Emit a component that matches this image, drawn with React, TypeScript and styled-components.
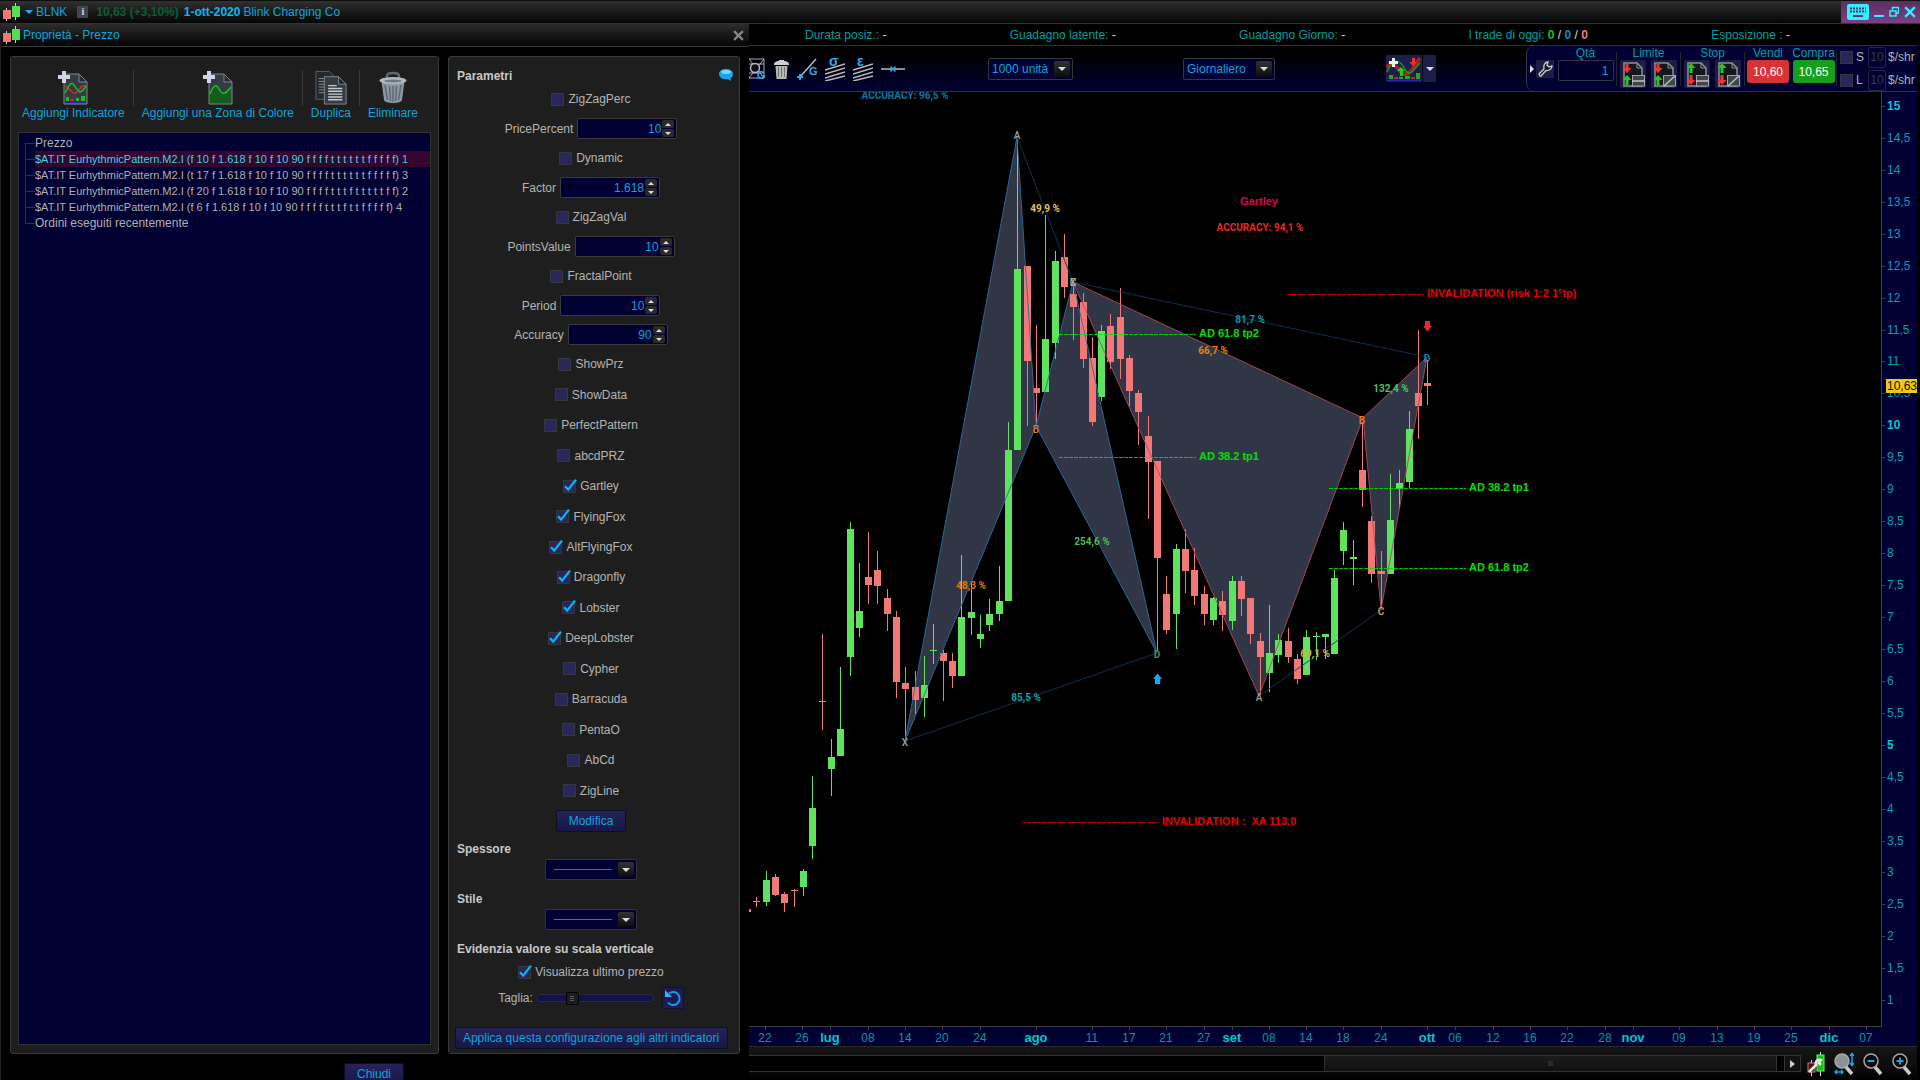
import React, { useState } from 'react';
import styled, { createGlobalStyle, css } from 'styled-components';

/* ---------- theme values ---------- */
const SANS = '"Liberation Sans", Arial, sans-serif';
const CYAN = '#0ba5dc';
const TEAL = '#009f9f';
const NAVY = '#000033';
const UP = '#5fe35f';
const DOWN = '#f27878';

const GlobalStyle = createGlobalStyle`
  * { box-sizing: border-box; }
  html, body { margin: 0; background: #000; }
  body, button, input, select {
    font-family: ${SANS};
    font-size: 12px;
    line-height: 16px;
  }
  button { padding: 0; border: 0; background: none; color: inherit; cursor: pointer; }
  svg { display: block; }
`;

/* ---------- window frame ---------- */
const Window = styled.div`
  height: 100vh;
  display: grid;
  grid-template-rows: 24px minmax(0, 1fr);
  overflow: hidden;
  background: #000;
  color: ${CYAN};
`;

const TitleBar = styled.header`
  display: flex;
  align-items: center;
  padding-left: 2px;
  border-top: 1px solid #0c0c0c;
  border-bottom: 1px solid #333;
  background: linear-gradient(#303030, #111 70%, #060606);
`;

const TitleGap = styled.span<{ $w: number }>`
  flex: none;
  width: ${(p) => p.$w}px;
`;

const Quote = styled.strong`
  color: #06602f;
`;

const SessionDate = styled.strong`
  margin-left: 5px;
  margin-right: 3px;
  color: #12b4f0;
`;

const InfoBadge = styled.button`
  width: 11px;
  height: 12px;
  margin: 0 8px 0 10px;
  background: #44444c;
  color: #ddd;
  font: bold 10px/12px "Liberation Serif", serif;
`;

const WindowControls = styled.div`
  display: flex;
  align-items: center;
  gap: 5px;
  align-self: stretch;
  width: 79px;
  margin-left: auto;
  padding-left: 6px;
  background: linear-gradient(#57305e, #7d3f86);
  color: #3af0ff;
`;

const Workspace = styled.div`
  display: grid;
  grid-template-columns: 749px minmax(0, 1fr);
  min-height: 0;
`;

/* ---------- properties dialog ---------- */
const Dialog = styled.section`
  display: flex;
  flex-direction: column;
  min-height: 0;
  overflow: hidden;
  border-left: 1px solid #222;
`;

const DialogTitle = styled.div`
  display: flex;
  align-items: center;
  justify-content: space-between;
  height: 23px;
  flex: none;
  padding: 0 5px 0 1px;
  border-bottom: 1px solid #383838;
  background: linear-gradient(#2c2c2c, #101010 70%, #050505);
`;

const DialogName = styled.h2`
  display: flex;
  align-items: center;
  gap: 3px;
  margin: 0;
  font-size: 12px;
  font-weight: normal;
`;

const DialogBody = styled.div`
  display: flex;
  flex: 1;
  gap: 9px;
  min-height: 0;
  padding: 9px 9px 0;
`;

const Panel = styled.div`
  display: flex;
  flex-direction: column;
  border: 1px solid #3a3a3a;
  border-radius: 3px;
  background: #1e1e1e;
`;

const IndicatorPanel = styled(Panel)`
  flex: 1;
  min-width: 0;
  padding: 0 7px 8px;
`;

const ParamPanel = styled(Panel)`
  width: 292px;
  flex: none;
  padding: 0 6px 4px 0;
  color: #b4b4b4;
`;

const DialogFooter = styled.div`
  display: flex;
  justify-content: center;
  flex: none;
  height: 26px;
  padding: 9px 2px 0 0;
`;

const IndicatorToolbar = styled.div`
  display: flex;
  height: 75px;
  flex: none;
  padding-top: 13px;
  margin-left: -4px;
`;

const ToolAction = styled.button`
  display: flex;
  flex-direction: column;
  align-items: center;
  justify-content: flex-start;
  padding: 1px 8px 0;
  white-space: nowrap;
`;

const ToolDivider = styled.span`
  width: 1px;
  height: 36px;
  background: #3a3a3a;
`;

const Tree = styled.ul`
  flex: 1;
  margin: 0;
  padding: 2px 0 0 6px;
  list-style: none;
  border: 1px solid #333;
  background: ${NAVY};
  color: #b0b0b0;
`;

const TreeItem = styled.li<{ $selected?: boolean }>`
  display: grid;
  grid-template-columns: 10px 1fr;
  height: 16px;
  --branch-top: 0px;
  --branch-size: 16px;
  &::before {
    content: '';
    background:
      linear-gradient(#064060, #064060) 0 8px / 10px 1px no-repeat,
      linear-gradient(#064060, #064060) 0 var(--branch-top) / 1px var(--branch-size) no-repeat;
  }
  &:first-child { --branch-top: 8px; --branch-size: 8px; }
  &:last-child { --branch-size: 8px; }
  ${(p) =>
    p.$selected &&
    css`
      color: #37d5e0;
      button { background: #33052f; }
    `}
`;

const TreeButton = styled.button<{ $long: boolean }>`
  font-size: ${(p) => (p.$long ? 11 : 12)}px;
  text-align: left;
  white-space: nowrap;
`;

/* ---------- parameter form ---------- */
const ParamHeader = styled.div`
  display: flex;
  justify-content: space-between;
  height: 27px;
  flex: none;
  padding: 11px 0 0 8px;
`;

const Heading = styled.h3`
  display: block;
  margin: 0;
  color: #c8c8c8;
  font: bold 12px/16px ${SANS};
`;

const CheckRow = styled.label<{ $h?: number }>`
  display: flex;
  align-items: center;
  justify-content: center;
  gap: 4px;
  height: ${(p) => (p.$h ? `${p.$h}px` : 'auto')};
`;

const CheckHolder = styled.span`
  position: relative;
  width: 13px;
  height: 13px;
  svg {
    position: absolute;
    left: 0;
    bottom: 1px;
    display: none;
    pointer-events: none;
  }
  input:checked + svg { display: block; }
`;

const CheckInput = styled.input`
  appearance: none;
  display: block;
  width: 13px;
  height: 13px;
  margin: 0;
  border: 1px solid #36363f;
  background: #29265a;
`;

const FieldRow = styled.label`
  display: flex;
  align-items: center;
  justify-content: center;
  gap: 4px;
  height: 29px;
`;

const Spinner = styled.span`
  display: flex;
  align-items: center;
  width: 100px;
  height: 21px;
  padding-right: 2px;
  border: 1px solid #3a3a3a;
  border-radius: 2px;
  background: ${NAVY};
`;

const SpinInput = styled.input`
  flex: 1;
  min-width: 0;
  padding: 0;
  border: 0;
  outline: 0;
  background: none;
  color: ${CYAN};
  text-align: right;
`;

const SpinButtons = styled.span`
  display: grid;
  gap: 1px;
  margin-left: 1px;
`;

const SpinButton = styled.button`
  display: grid;
  place-items: center;
  width: 12px;
  height: 8px;
  border-radius: 2px;
  background: #2a2a2a;
`;

const PatternList = styled.div`
  display: grid;
  grid-auto-rows: 1fr;
  flex: 1;
  min-height: 0;
`;

const CenterRow = styled.div<{ $h: number }>`
  display: flex;
  align-items: center;
  justify-content: center;
  height: ${(p) => p.$h}px;
  flex: none;
`;

const ApplyRow = styled(CenterRow)`
  align-items: flex-end;
`;

const PushButton = styled.button<{ $w: number }>`
  width: ${(p) => p.$w}px;
  height: 22px;
  flex: none;
  border: 1px solid #0e0e22;
  border-radius: 2px;
  background: linear-gradient(#242458, #161648);
  color: ${CYAN};
`;

const Section = styled.div`
  flex: none;
  padding: 6px 0 5px;
  ${Heading} { padding: 0 0 0 8px; margin-bottom: 2px; }
`;

const SelectFrame = styled.span<{ $w: number; $h: number }>`
  display: flex;
  align-items: center;
  width: ${(p) => p.$w}px;
  height: ${(p) => p.$h}px;
  flex: none;
  position: relative;
  border: 1px solid #36363a;
  border-radius: 2px;
  background: ${NAVY};
`;

const Select = styled.select`
  appearance: none;
  width: 100%;
  height: 100%;
  padding: 0 18px 0 3px;
  border: 0;
  outline: 0;
  background: none;
  color: ${CYAN};
`;

const LineSelect = styled(Select)`
  color: transparent;
  background: linear-gradient(#0e86b8, #0e86b8) 8px 50% / 58px 1px no-repeat;
`;

const DropMark = styled.span`
  position: absolute;
  top: 2px;
  right: 2px;
  bottom: 2px;
  display: grid;
  place-items: center;
  width: 16px;
  border-radius: 2px;
  background: linear-gradient(#333, #0c0c0c);
  pointer-events: none;
`;

const SizeRow = styled.div`
  display: flex;
  align-items: center;
  justify-content: center;
  height: 26px;
`;

const Slider = styled.input`
  appearance: none;
  width: 118px;
  height: 14px;
  margin: 0 8px 0 3px;
  background: none;
  &::-webkit-slider-runnable-track {
    height: 8px;
    border: 1px solid #2c2c40;
    border-radius: 4px;
    background: #11114e;
  }
  &::-webkit-slider-thumb {
    appearance: none;
    width: 13px;
    height: 13px;
    margin-top: -3px;
    border: 1px solid #000;
    border-radius: 2px;
    background:
      linear-gradient(#555, #555) 50% 3px / 4px 1px no-repeat,
      linear-gradient(#555, #555) 50% 5px / 4px 1px no-repeat,
      linear-gradient(#555, #555) 50% 7px / 4px 1px no-repeat,
      #1c1c1e;
  }
`;

const ResetButton = styled.button`
  display: grid;
  place-items: center;
  width: 22px;
  height: 22px;
  border: 1px solid #111130;
  background: #1c1c54;
`;

/* ---------- trading column ---------- */
const TradeColumn = styled.main`
  display: grid;
  grid-template-rows: 22px 46px minmax(0, 1fr) 34px;
  min-height: 0;
  padding-right: 3px;
`;

const StatusRow = styled.div`
  display: flex;
  align-items: center;
  justify-content: space-between;
  padding: 0 127px 0 56px;
  border-bottom: 1px solid #303030;
  color: ${TEAL};
  white-space: pre;
`;

const Count = styled.strong<{ $c: string }>`
  color: ${(p) => p.$c};
`;

const White = styled.span`
  color: #d8d8d8;
`;

const ToolRow = styled.div`
  display: flex;
  align-items: stretch;
  border-bottom: 1px solid #303038;
  background: linear-gradient(#000, #000004 25%, ${NAVY});
`;

const DrawTools = styled.div`
  display: flex;
  align-items: center;
  gap: 8px;
  width: 239px;
`;

const ToolCell = styled.div<{ $w: number }>`
  display: flex;
  align-items: center;
  flex: 0 1 ${(p) => p.$w}px;
`;

const IndicatorButton = styled.div`
  display: flex;
  width: 50px;
  height: 27px;
  gap: 1px;
  button { background: #1e1e4a; display: grid; place-items: center; }
  button:first-child { flex: 1; }
  button:last-child { width: 13px; }
`;

const OrderPanel = styled.div`
  display: flex;
  flex: none;
  width: 391px;
  margin-left: auto;
  border-left: 1px solid #3a3a44;
  border-radius: 8px 0 0 8px;
  background: ${NAVY};
  color: ${TEAL};
`;

const OrderLead = styled.div`
  display: flex;
  align-items: center;
  gap: 2px;
  width: 28px;
  padding-left: 3px;
`;

const OrderDivider = styled.span`
  align-self: center;
  width: 1px;
  height: 34px;
  background: #242432;
`;

const OrderGroup = styled.div<{ $w: number }>`
  display: flex;
  flex-direction: column;
  align-items: center;
  width: ${(p) => p.$w}px;
`;

const OrderLabel = styled.span`
  line-height: 14px;
  white-space: nowrap;
`;

const SquareButton = styled.button`
  display: grid;
  place-items: center;
  width: 18px;
  height: 18px;
  background: #1c1c44;
`;

const OrderButtons = styled.div`
  display: flex;
  gap: 5px;
`;

const OrderButton = styled.button`
  display: grid;
  place-items: center;
  width: 26px;
  height: 28px;
  border-radius: 2px;
  background: #1c1c44;
`;

const QtyInput = styled.input`
  width: 56px;
  height: 21px;
  padding: 0 4px;
  border: 1px solid #34344a;
  border-radius: 2px;
  background: #00002a;
  color: ${CYAN};
  text-align: right;
`;

const PriceButton = styled.button<{ $c: string }>`
  width: 42px;
  height: 23px;
  border-radius: 3px;
  background: ${(p) => p.$c};
  color: #fff;
`;

const RiskGrid = styled.div`
  display: grid;
  grid-template-rows: 22px 22px;
  gap: 1px;
  padding-left: 3px;
  color: #b4b4b4;
`;

const RiskRow = styled.div`
  display: flex;
  align-items: center;
  label { width: 12px; margin-left: 3px; }
`;

const RiskInput = styled.input`
  width: 18px;
  height: 21px;
  margin-right: 2px;
  padding: 0;
  border: 1px solid #26263c;
  border-radius: 2px;
  background: none;
  color: #3a3a48;
  text-align: center;
`;

const ChartFrame = styled.div`
  min-height: 0;
  svg { width: 100%; height: 100%; }
`;

const BottomBar = styled.footer`
  display: flex;
  align-items: center;
  padding-right: 5px;
  border-top: 1px solid #2a2a2a;
  background: linear-gradient(#151515, #0c0c0c 60%, #000);
`;

const ScrollTrack = styled.div`
  display: grid;
  grid-template-columns: 575fr 453fr 7fr;
  flex: 1;
  height: 17px;
  border: solid #333;
  border-width: 1px 0;
  background: #000;
`;

const ScrollThumb = styled.div`
  grid-column: 2;
  display: grid;
  place-items: center;
  border: solid #333;
  border-width: 0 1px;
  background: linear-gradient(#1c1c1c, #101010);
  &::after { content: ''; width: 5px; height: 5px; background: #2c2c2c; }
`;

const ScrollArrow = styled.button`
  display: grid;
  place-items: center;
  width: 17px;
  height: 17px;
  border: 1px solid #333;
  background: #111;
`;

const ZoomTools = styled.div`
  display: flex;
  gap: 9px;
  margin-left: 6px;
`;

/* ---------- small drawings ---------- */
const CandlesIcon = () => (
  <svg width="18" height="18" viewBox="0 0 18 18">
    <path d="M4.500 5v13M13.500 0v17" stroke="#b8d8b0" />
    <rect x="1" y="7" width="8" height="9" fill={DOWN} />
    <rect x="10" y="3" width="8" height="11" fill="#4ee04e" />
  </svg>
);

const Caret = ({ up, w = 8, color = '#ddd' }: { up?: boolean; w?: number; color?: string }) => (
  <svg width={w} height={w / 2} viewBox="0 0 8 4">
    <path d={up ? 'M0 4L4 0L8 4Z' : 'M0 0H8L4 4Z'} fill={color} />
  </svg>
);

const CheckMark = () => (
  <svg width="14" height="14" viewBox="0 0 14 14">
    <path d="M2 8.200L5.200 11.600L13 1.600" fill="none" stroke="#0bb4f5" strokeWidth="2.300" />
  </svg>
);

const AddDocIcon = ({ zone }: { zone?: boolean }) => (
  <svg width="30" height="34" viewBox="0 0 30 34">
    <path d="M6 3H21L29 11V33H6Z" fill="#343c42" stroke="#7b868e" />
    <path d="M21 3V11H29Z" fill="#252b30" stroke="#7b868e" />
    {zone ? (
      <>
        <path d="M7 32V23C10 15 13 12 16 18C19 24 22 24 28 16V32Z" fill="#145c1c" />
        <path d="M7 23C10 15 13 12 16 18C19 24 22 24 28 16" fill="none" stroke="#22c022" strokeWidth="1.500" />
      </>
    ) : (
      <>
        <path d="M7 15C12 16 14 24 18 22C22 20 22 13 28 15" fill="none" stroke="#d82828" strokeWidth="1.500" />
        <path d="M7 22C10 18 12 9 16 14C20 20 22 25 28 15" fill="none" stroke="#22b822" strokeWidth="1.500" />
        <path d="M8 30V26H11V30M18 30V27H21V30M23 30V25H27V30Z" fill="#22b822" />
        <path d="M12 30V28H16V30Z" fill="#e02020" />
        <path d="M7 31H28" stroke="#2323c0" strokeWidth="2" />
      </>
    )}
    <path d="M4 0H8V4H12V8H8V12H4V8H0V4H4Z" fill="#d4d4e8" />
  </svg>
);

const CopyIcon = () => (
  <svg width="34" height="34" viewBox="0 0 34 36">
    <path d="M1 0.500H15L22 7V30H1Z" fill="#23282c" stroke="#5a6268" />
    <path d="M4 8H10M4 11H10M4 14H10M4 17H10M4 20H10M4 23H10" stroke="#8d959a" />
    <path d="M10 6H25L33 14V35H10Z" fill="#343c42" stroke="#7b868e" />
    <path d="M25 6V14H33Z" fill="#20262a" stroke="#7b868e" />
    <path d="M14 15.500H23M14 18.500H29M14 21.500H29M14 24.500H29M14 27.500H29M14 30.500H29" stroke="#c4cace" strokeWidth="1.500" />
  </svg>
);

const BinIcon = () => (
  <svg width="28" height="34" viewBox="0 0 28 34">
    <path d="M8 8V5C8 1 20 1 20 5V8" fill="none" stroke="#5c6876" strokeWidth="2.500" />
    <path d="M2.500 10L5 29C6 33 22 33 23 29L25.500 10Z" fill="#8b99a4" />
    <path d="M6 14L8.500 29M10.500 15L11.500 30M14 15V31M17.500 15L16.500 30M22 14L19.500 29" stroke="#5b6873" strokeWidth="1.500" />
    <ellipse cx="14" cy="9.500" rx="13.500" ry="3.500" fill="#aebbc4" />
    <ellipse cx="14" cy="10" rx="9" ry="1.500" fill="#6d7a85" />
  </svg>
);

const BubbleIcon = () => (
  <svg width="14" height="14" viewBox="0 0 14 14">
    <path d="M7 1C11 1 14 3 14 6C14 8 13 9.500 11.500 10.300L12 13L9 11.200C4 12 0 9.500 0 6C0 3 3 1 7 1Z" fill="#18a4ee" />
    <ellipse cx="7" cy="4" rx="5" ry="2" fill="#7fd4fa" />
  </svg>
);

const CloseIcon = ({ size, color, w = 2 }: { size: number; color: string; w?: number }) => (
  <svg width={size} height={size} viewBox="0 0 10 10">
    <path d="M1 1L9 9M9 1L1 9" stroke={color} strokeWidth={w} />
  </svg>
);

const ResetIcon = () => (
  <svg width="18" height="18" viewBox="0 0 18 18">
    <path d="M5 4.500A6.500 6.500 0 1 1 4 13.500" fill="none" stroke="#189ae0" strokeWidth="2" />
    <path d="M1 1V8H8Z" fill="#2cb6f2" />
  </svg>
);

const GridToolIcon = () => (
  <svg width="17" height="22" viewBox="0 0 17 22">
    <path d="M0 1H15V20H0M0 1L15 20M15 1L0 20M0 6H15M0 15H15" fill="none" stroke="#a8a8b0" />
    <circle cx="6" cy="10" r="4.500" fill="#101018" stroke="#b8b8c0" strokeWidth="1.500" />
    <text x="8" y="21" fontSize="11" fontWeight="bold" fill="#30a8e8">G</text>
  </svg>
);

const SmallBinIcon = () => (
  <svg width="15" height="20" viewBox="0 0 15 20">
    <path d="M0 5C1 2 4 2 5 2V1H10V2C11 2 14 2 15 5V6H0Z" fill="#d0d0d0" />
    <path d="M1.500 7H13.500L12.500 20H2.500Z" fill="#b8b8b8" />
    <path d="M4.500 8V18M7.500 8V18M10.500 8V18" stroke="#707070" />
  </svg>
);

const SegmentIcon = () => (
  <svg width="20" height="22" viewBox="0 0 20 22">
    <path d="M3 19L19 1" stroke="#b8b8b8" strokeWidth="1.500" />
    <path d="M0 19H6M3 16V22" stroke="#30a8e8" strokeWidth="2" />
    <text x="12" y="17" fontSize="11" fontWeight="bold" fill="#30a8e8">G</text>
  </svg>
);

const ChannelIcon = ({ letter }: { letter: string }) => (
  <svg width="20" height="24" viewBox="0 0 20 24">
    <path d="M0 13L20 7M0 17L20 11M0 21L20 15M0 24L20 19" stroke="#b8b8b8" strokeWidth="1.500" />
    <text x="4" y="9" fontSize="14" fontWeight="bold" fill="#30a8e8">{letter}</text>
  </svg>
);

const HLineIcon = () => (
  <svg width="24" height="10" viewBox="0 0 24 10">
    <path d="M0 5H24" stroke="#b8b8b8" strokeWidth="1.500" />
    <path d="M9.500 2.500L14.500 7.500M14.500 2.500L9.500 7.500" stroke="#30a8e8" strokeWidth="1.500" />
  </svg>
);

const IndicatorIcon = () => (
  <svg width="36" height="27" viewBox="0 0 36 27">
    <path d="M1 13C6 4 10 12 16 18C22 22 26 16 34 3" fill="none" stroke="#a82020" strokeWidth="4" />
    <path d="M1 17C8 2 14 4 20 16C24 22 28 14 34 8" fill="none" stroke="#189818" strokeWidth="1.500" />
    <path d="M14 21V16H11L15 12L19 16H17V21Z" fill="#18d018" />
    <path d="M26 3V7H23L27 11L31 7H29V3Z" fill="#f03030" />
    <path d="M3 24V20H7V24M13 24V22H17V24M19 24V21H24V24M30 24V18H34V24Z" fill="#18b018" />
    <path d="M8 24V22H12V24M25 24V22H29V24Z" fill="#d02020" />
    <path d="M1 25.500H35" stroke="#2424b0" />
    <path d="M6 3H9V6H12V9H9V12H6V9H3V6H6Z" fill="#f0f0f0" />
  </svg>
);

const WrenchIcon = () => (
  <svg width="15" height="16" viewBox="0 0 15 16">
    <path d="M2 15L1 13L6 8C5 4 7 1 10 1L9 4L11 6L14 5C14 8 11 10 8 9.500L3 15Z" fill="#14141c" stroke="#d0d0d0" strokeWidth="1.300" />
  </svg>
);

const OrderIcon = ({ top, bottom, stop }: { top: string; bottom: string; stop?: boolean }) => {
  const down = 'M-1.500 -5H1.500V0H4.500L0 5L-4.500 0H-1.500Z';
  const upward = 'M-1.500 5H1.500V0H4.500L0 -5L-4.500 0H-1.500Z';
  return (
    <svg width="24" height="25" viewBox="0 0 24 25">
      <path d="M3 1H16L21 6V24H3Z" fill="#16161e" stroke="#909090" strokeWidth="1.500" />
      <path d="M16 1V6H21" fill="none" stroke="#909090" />
      <path d={top === 'red' ? down : upward} transform="translate(6 6)" fill={top === 'red' ? '#f03434' : '#20c820'} />
      <path d={bottom === 'red' ? down : upward} transform="translate(6 18)" fill={bottom === 'red' ? '#f03434' : '#20c820'} />
      <rect x="11.500" y="13.500" width="12" height="10.500" fill="#3c464c" stroke="#a0a0a0" />
      <path d={stop ? 'M12 24L23 14' : 'M11 19H24'} stroke="#c0c0c0" strokeWidth="1.500" />
    </svg>
  );
};

const KeyboardIcon = () => (
  <svg width="22" height="16" viewBox="0 0 22 16">
    <rect width="22" height="16" rx="2" fill="#2ef0ff" />
    <path d="M3 4.500H19M3 7.500H19" stroke="#4a3a70" strokeWidth="2" strokeDasharray="2 1" />
    <path d="M6 12H16" stroke="#4a3a70" strokeWidth="2" />
  </svg>
);

const MinimizeIcon = () => (
  <svg width="10" height="14" viewBox="0 0 10 14">
    <path d="M0 11H10" stroke="#2ef0ff" strokeWidth="2" />
  </svg>
);

const RestoreIcon = () => (
  <svg width="10" height="12" viewBox="0 0 10 12">
    <path d="M3.500 4V1.500H9.500V7H7" fill="none" stroke="#2ef0ff" strokeWidth="1.500" />
    <rect x="1" y="5" width="6" height="5" fill="none" stroke="#2ef0ff" strokeWidth="1.500" />
  </svg>
);

const ChartSettingsIcon = () => (
  <svg width="18" height="24" viewBox="0 0 18 24">
    <path d="M4.500 8V24M13.500 0V24" stroke="#ddd" />
    <rect x="1" y="11" width="7" height="9" fill="#401818" stroke="#f07070" />
    <rect x="10" y="3" width="7" height="16" fill="#10c010" stroke="#70f070" />
    <path d="M2 20L9 13C8 9 11 7 14 8L12 11L14 13" fill="none" stroke="#e8e8e8" strokeWidth="2.500" />
  </svg>
);

const MagnifierIcon = ({ kind }: { kind: 'fit' | 'out' | 'in' }) => (
  <svg width="20" height="24" viewBox="0 0 20 24">
    <path d="M12 15L18 22" stroke="#c8c8c8" strokeWidth="3.500" />
    <circle cx="8" cy="9" r="7" fill={kind === 'fit' ? '#8a9298' : '#050508'} stroke="#a8a8a8" strokeWidth="1.500" />
    {kind !== 'fit' && <path d="M4.500 9H11.500" stroke="#1aa4f0" strokeWidth="2" />}
    {kind === 'in' && <path d="M8 5.500V12.500" stroke="#1aa4f0" strokeWidth="2" />}
    {kind === 'fit' && (
      <path d="M18 2V13M16 4L18 1.500L20 4M16 11L18 13.500L20 11M1 20H9M3 18L1 20L3 22M7 18L9 20L7 22" fill="none" stroke="#1aa4f0" strokeWidth="1.500" />
    )}
  </svg>
);

/* ---------- chart ---------- */
type Candle = [up: 0 | 1, high: number, top: number, bottom: number, low: number];

const candles: Candle[] = [
  [0, 897, 901, 902, 907], [1, 871, 880, 902, 906], [0, 874, 877, 895, 896], [0, 892, 894, 903, 912],
  [0, 889, 890, 891, 907], [1, 869, 871, 887, 896], [1, 776, 808, 846, 859], [0, 634, 701, 702, 730],
  [1, 739, 757, 769, 796], [1, 667, 729, 756, 756], [1, 522, 529, 657, 676], [1, 563, 611, 628, 637],
  [0, 532, 577, 585, 604], [0, 551, 570, 586, 604], [0, 589, 598, 614, 631], [0, 611, 617, 682, 698],
  [0, 667, 683, 689, 740], [0, 671, 687, 700, 714], [1, 656, 685, 698, 717], [1, 624, 650, 651, 664],
  [0, 650, 653, 661, 701], [0, 653, 661, 676, 688], [1, 555, 617, 676, 676], [1, 583, 612, 618, 635],
  [1, 615, 634, 639, 648], [1, 599, 614, 625, 631], [1, 566, 601, 614, 621], [1, 422, 450, 601, 601],
  [1, 137, 269, 450, 450], [0, 266, 266, 361, 426], [0, 325, 388, 393, 425], [1, 215, 339, 392, 392],
  [1, 251, 261, 343, 359], [0, 234, 257, 287, 298], [0, 282, 294, 307, 340], [0, 293, 302, 359, 368],
  [0, 337, 358, 422, 426], [1, 325, 331, 397, 401], [0, 314, 326, 362, 369], [0, 288, 317, 359, 379],
  [0, 355, 358, 391, 406], [0, 390, 393, 412, 445], [0, 416, 436, 462, 519], [0, 461, 461, 558, 650],
  [0, 576, 594, 630, 634], [1, 544, 549, 614, 649], [0, 529, 549, 571, 593], [0, 548, 570, 596, 605],
  [0, 586, 594, 614, 625], [1, 597, 598, 620, 625], [0, 591, 601, 615, 631], [1, 576, 581, 621, 630],
  [0, 576, 581, 599, 616], [0, 598, 598, 634, 644], [0, 633, 641, 657, 695], [1, 605, 653, 673, 692],
  [1, 634, 640, 655, 663], [0, 628, 641, 657, 663], [0, 654, 659, 679, 684], [1, 630, 637, 675, 675],
  [1, 632, 636, 637, 660], [1, 634, 634, 637, 659], [1, 570, 578, 654, 654], [1, 522, 530, 551, 565],
  [1, 540, 557, 559, 585], [0, 422, 470, 490, 507], [0, 516, 521, 574, 583], [0, 551, 571, 574, 608],
  [1, 474, 520, 574, 574], [1, 470, 483, 489, 509], [1, 411, 429, 482, 488], [0, 330, 393, 406, 439],
  [0, 360, 383, 386, 405],
];

const candleX = (i: number) => Math.round(756.3 + i * 9.32);
const priceY = (p: number) => 106 + (15 - p) * 63.87;

const days: [number, string][] = [
  [765, '22'], [802, '26'], [830, 'lug'], [868, '08'], [905, '14'], [942, '20'], [980, '24'], [1036, 'ago'],
  [1092, '11'], [1129, '17'], [1166, '21'], [1204, '27'], [1232, 'set'], [1269, '08'], [1306, '14'], [1343, '18'],
  [1381, '24'], [1427, 'ott'], [1455, '06'], [1493, '12'], [1530, '16'], [1567, '22'], [1605, '28'], [1633, 'nov'],
  [1679, '09'], [1717, '13'], [1754, '19'], [1791, '25'], [1829, 'dic'], [1866, '07'],
];

const levels: [number, number, number, string, string][] = [
  [1059, 1196, 334, 'AD 61.8 tp2', '#00e000'],
  [1059, 1196, 457, 'AD 38.2 tp1', '#00e000'],
  [1329, 1466, 488, 'AD 38.2 tp1', '#00e000'],
  [1329, 1466, 568, 'AD 61.8 tp2', '#00e000'],
  [1287, 1424, 294, 'INVALIDATION (risk 1:2 1°tp)', '#e80000'],
  [1022, 1159, 822, 'INVALIDATION :\u00a0 XA 113.0', '#e80000'],
];

const ratios: [number, number, string, string][] = [
  [905, 96, 'ACCURACY: 96,5 %', '#0878a8'],
  [1260, 228, 'ACCURACY: 94,1 %', '#e82828'],
  [1045, 209, '49,9 %', '#e8c058'],
  [971, 586, '48,3 %', '#e07a08'],
  [1092, 542, '254,6 %', '#50b858'],
  [1026, 698, '85,5 %', '#0aa0b0'],
  [1250, 320, '81,7 %', '#0a98b8'],
  [1213, 351, '66,7 %', '#e08808'],
  [1391, 389, '132,4 %', '#50c058'],
  [1315, 654, '69,1 %', '#d8b040'],
];

const pivots: [number, number, string, string][] = [
  [1017, 135, 'A', '#a0a0a0'], [905, 742, 'X', '#a0a0a0'], [1036, 429, 'B', '#e07a08'],
  [1073, 282, 'X', '#a8a8a8'], [1073, 282, 'C', '#b8b070'], [1157, 654, 'D', '#48a058'],
  [1259, 697, 'A', '#a0a0a0'], [1362, 420, 'B', '#e08808'], [1381, 611, 'C', '#d8b040'],
  [1427, 358, 'D', '#0a98b8'],
];

const Chart = () => (
  <svg viewBox="749 92 1168 954" preserveAspectRatio="xMinYMin meet" fontFamily={SANS} role="img" aria-label="Blink Charging Co">
    <rect x="1881" y="92" width="36" height="954" fill={NAVY} />
    <rect x="749" y="1026" width="1168" height="20" fill={NAVY} />
    <path d="M749 1026.500H1881.500V92" fill="none" stroke="#404040" />

    <g fill="#313646">
      <path d="M905 741L1017 137L1036 426Z" />
      <path d="M1036 426L1073 282L1157 653Z" />
      <path d="M1073 282L1259 696L1363 418Z" />
      <path d="M1363 418L1381 610L1427 357Z" />
    </g>

    <rect x="749" y="909" width="2" height="3" fill={DOWN} />
    {candles.map(([up, high, top, bottom, low], i) => {
      const x = candleX(i);
      const c = up ? UP : DOWN;
      return (
        <g key={i}>
          <rect x={x} y={high} width="1" height={low - high} fill={c} />
          <rect x={x - 3} y={top} width="7" height={Math.max(1, bottom - top)} fill={c} />
        </g>
      );
    })}

    <g fill="none" stroke="#2c6f9e" strokeOpacity="0.9">
      <path d="M905 741L1017 137L1036 426ZM1036 426L1073 282L1157 653Z" />
    </g>
    <g fill="none" stroke="#a84a5a" strokeOpacity="0.9">
      <path d="M1073 282L1259 696L1363 418ZM1363 418L1381 610L1427 357Z" />
    </g>
    <path d="M905 741L1157 653M1017 137L1073 282L1427 357M1259 696L1381 610" fill="none" stroke="#0a3a5c" strokeOpacity="0.9" />

    {levels.map(([x1, x2, y, text, color], i) => (
      <g key={i}>
        <path d={`M${x1} ${y}.5H${x2}`} stroke={color} strokeOpacity="0.85" strokeDasharray="4 1" />
        <text x={x2 + 3} y={y + 3} fontSize="11" fontWeight="bold" fill={color}>{text}</text>
      </g>
    ))}
    <g fontFamily="Roboto, sans-serif" fontSize="10" fontWeight="bold" textAnchor="middle">
      {ratios.map(([x, y, text, color]) => (
        <text key={text} x={x} y={y + 3} fill={color}>{text}</text>
      ))}
    </g>
    <g fontFamily="Roboto, sans-serif" fontSize="10" fontWeight="500" textAnchor="middle">
      {pivots.map(([x, y, text, color], i) => (
        <text key={i} x={x} y={y + 4} fill={color}>{text}</text>
      ))}
    </g>
    <text x="1259" y="205" fontSize="11" fontWeight="bold" textAnchor="middle" fill="#e0005c">Gartley</text>

    <path d="M1425 321H1430V326H1432L1427.500 331.500L1423 326H1425Z" fill="#f02828" />
    <path d="M1155 684H1160V679H1162L1157.500 673.500L1153 679H1155Z" fill="#18a8f8" />

    {Array.from({ length: 29 }, (_, i) => 15 - i / 2).map((p) => {
      const major = p % 5 === 0;
      return (
        <g key={p}>
          <path d={`M1881 ${Math.round(priceY(p))}.5h4`} stroke="#404040" />
          <text x="1887" y={Math.round(priceY(p)) + 4} fontSize="12" fontWeight={major ? 'bold' : 'normal'} fill={major ? '#00c8d8' : '#00a0b8'}>
            {String(p).replace('.', ',')}
          </text>
        </g>
      );
    })}
    <rect x="1886" y="379" width="31" height="14" fill="#f0c818" />
    <text x="1887" y="390" fontSize="12" fill="#111">10,63</text>

    {days.map(([x, text], i) => {
      const month = text.length > 2;
      return (
        <g key={i}>
          <path d={`M${x}.5 1026v4`} stroke="#404040" />
          <text x={x} y="1042" fontSize={month ? 13 : 12} fontWeight={month ? 'bold' : 'normal'} textAnchor="middle" fill={month ? '#00c8c8' : '#009898'}>
            {text}
          </text>
        </g>
      );
    })}
  </svg>
);

/* ---------- form parts ---------- */
const Check = ({ label, checked, h }: { label: string; checked?: boolean; h?: number }) => (
  <CheckRow $h={h}>
    <CheckHolder>
      <CheckInput type="checkbox" defaultChecked={checked} />
      <CheckMark />
    </CheckHolder>
    {label}
  </CheckRow>
);

const NumberField = ({ label, value }: { label: string; value: string }) => {
  const [text, setText] = useState(value);
  const decimals = value.split('.')[1]?.length ?? 0;
  const step = (n: number) => setText((t) => (Number(t) + n).toFixed(decimals));
  return (
    <FieldRow>
      {label}
      <Spinner>
        <SpinInput inputMode="decimal" value={text} onChange={(e) => setText(e.target.value)} />
        <SpinButtons>
          <SpinButton type="button" aria-label={`${label} +`} onClick={() => step(1)}><Caret up w={6} /></SpinButton>
          <SpinButton type="button" aria-label={`${label} -`} onClick={() => step(-1)}><Caret w={6} /></SpinButton>
        </SpinButtons>
      </Spinner>
    </FieldRow>
  );
};

const Combo = ({ label, options, w }: { label: string; options: string[]; w: number }) => (
  <SelectFrame $w={w} $h={22}>
    <Select aria-label={label}>{options.map((o) => <option key={o}>{o}</option>)}</Select>
    <DropMark><Caret /></DropMark>
  </SelectFrame>
);

const LineCombo = ({ id }: { id: string }) => (
  <CenterRow $h={21}>
    <SelectFrame $w={92} $h={21}>
      <LineSelect id={id}><option>1</option><option>2</option></LineSelect>
      <DropMark><Caret /></DropMark>
    </SelectFrame>
  </CenterRow>
);

const params: [string, string, string][] = [
  ['ZigZagPerc', 'PricePercent', '10'],
  ['Dynamic', 'Factor', '1.618'],
  ['ZigZagVal', 'PointsValue', '10'],
  ['FractalPoint', 'Period', '10'],
];

const patterns: [string, boolean][] = [
  ['ShowPrz', false], ['ShowData', false], ['PerfectPattern', false], ['abcdPRZ', false],
  ['Gartley', true], ['FlyingFox', true], ['AltFlyingFox', true], ['Dragonfly', true],
  ['Lobster', true], ['DeepLobster', true], ['Cypher', false], ['Barracuda', false],
  ['PentaO', false], ['AbCd', false], ['ZigLine', false],
];

const treeItems = [
  'Prezzo',
  '$AT.IT EurhythmicPattern.M2.I (f 10 f 1.618 f 10 f 10 90 f f f f t t t t t t f f f f f) 1',
  '$AT.IT EurhythmicPattern.M2.I (t 17 f 1.618 f 10 f 10 90 f f f f t t t t t t f f f f f) 3',
  '$AT.IT EurhythmicPattern.M2.I (f 20 f 1.618 f 10 f 10 90 f f f f t t t f t t t t t f f) 2',
  '$AT.IT EurhythmicPattern.M2.I (f 6 f 1.618 f 10 f 10 90 f f f f t t t f t t f f f f f) 4',
  'Ordini eseguiti recentemente',
];

const PropertiesDialog = () => {
  const [selected, setSelected] = useState(1);
  return (
    <Dialog>
      <DialogTitle>
        <DialogName><CandlesIcon />Proprietà - Prezzo</DialogName>
        <button aria-label="Chiudi finestra"><CloseIcon size={11} color="#888" /></button>
      </DialogTitle>
      <DialogBody>
        <IndicatorPanel>
          <IndicatorToolbar>
            <ToolAction><AddDocIcon />Aggiungi Indicatore</ToolAction>
            <ToolDivider />
            <ToolAction><AddDocIcon zone />Aggiungi una Zona di Colore</ToolAction>
            <ToolDivider />
            <ToolAction><CopyIcon />Duplica</ToolAction>
            <ToolDivider />
            <ToolAction><BinIcon />Eliminare</ToolAction>
          </IndicatorToolbar>
          <Tree>
            {treeItems.map((t, i) => (
              <TreeItem key={t} $selected={i === selected}>
                <TreeButton $long={t.length > 40} onClick={() => setSelected(i)}>{t}</TreeButton>
              </TreeItem>
            ))}
          </Tree>
        </IndicatorPanel>
        <ParamPanel>
          <ParamHeader>
            <Heading>Parametri</Heading>
            <BubbleIcon />
          </ParamHeader>
          {params.map(([flag, field, value]) => (
            <React.Fragment key={flag}>
              <Check label={flag} h={30} />
              <NumberField label={field} value={value} />
            </React.Fragment>
          ))}
          <NumberField label="Accuracy" value="90" />
          <PatternList>
            {patterns.map(([name, on]) => <Check key={name} label={name} checked={on} />)}
          </PatternList>
          <CenterRow $h={29}><PushButton $w={70}>Modifica</PushButton></CenterRow>
          <Section>
            <Heading as="label" htmlFor="spessore">Spessore</Heading>
            <LineCombo id="spessore" />
          </Section>
          <Section>
            <Heading as="label" htmlFor="stile">Stile</Heading>
            <LineCombo id="stile" />
          </Section>
          <Section>
            <Heading>Evidenzia valore su scala verticale</Heading>
            <Check label="Visualizza ultimo prezzo" checked h={26} />
            <SizeRow>
              <label htmlFor="taglia">Taglia:</label>
              <Slider id="taglia" type="range" min={0} max={100} defaultValue={28} />
              <ResetButton aria-label="Ripristina"><ResetIcon /></ResetButton>
            </SizeRow>
          </Section>
          <ApplyRow $h={33}>
            <PushButton $w={273}>Applica questa configurazione agli altri indicatori</PushButton>
          </ApplyRow>
        </ParamPanel>
      </DialogBody>
      <DialogFooter><PushButton $w={60}>Chiudi</PushButton></DialogFooter>
    </Dialog>
  );
};

const OrderEntry = () => (
  <OrderPanel>
    <OrderLead>
      <svg width="4" height="8" viewBox="0 0 4 8"><path d="M0 0L4 4L0 8Z" fill="#ddd" /></svg>
      <SquareButton aria-label="Impostazioni"><WrenchIcon /></SquareButton>
    </OrderLead>
    <OrderGroup $w={61}>
      <OrderLabel as="label" htmlFor="qty">Qtà</OrderLabel>
      <QtyInput id="qty" defaultValue="1" />
    </OrderGroup>
    <OrderDivider />
    <OrderGroup $w={63}>
      <OrderLabel>Limite</OrderLabel>
      <OrderButtons>
        <OrderButton aria-label="Limite"><OrderIcon top="red" bottom="green" /></OrderButton>
        <OrderButton aria-label="Limite obliquo"><OrderIcon top="red" bottom="green" stop /></OrderButton>
      </OrderButtons>
    </OrderGroup>
    <OrderDivider />
    <OrderGroup $w={63}>
      <OrderLabel>Stop</OrderLabel>
      <OrderButtons>
        <OrderButton aria-label="Stop"><OrderIcon top="green" bottom="red" /></OrderButton>
        <OrderButton aria-label="Stop obliquo"><OrderIcon top="green" bottom="red" stop /></OrderButton>
      </OrderButtons>
    </OrderGroup>
    <OrderDivider />
    <OrderGroup $w={46}>
      <OrderLabel>Vendi</OrderLabel>
      <PriceButton $c="#d83232">10,60</PriceButton>
    </OrderGroup>
    <OrderGroup $w={45}>
      <OrderLabel>Compra</OrderLabel>
      <PriceButton $c="#14a01c">10,65</PriceButton>
    </OrderGroup>
    <OrderDivider />
    <RiskGrid>
      {['S', 'L'].map((k) => (
        <RiskRow key={k}>
          <CheckInput type="checkbox" id={`risk-${k}`} />
          <label htmlFor={`risk-${k}`}>{k}</label>
          <RiskInput aria-label={`${k} $/shr`} defaultValue="10" />
          $/shr
        </RiskRow>
      ))}
    </RiskGrid>
  </OrderPanel>
);

export default function App() {
  return (
    <>
      <GlobalStyle />
      <Window>
        <TitleBar>
          <CandlesIcon />
          <TitleGap $w={5} />
          <Caret w={8} color="#12b4f0" />
          <TitleGap $w={3} />
          BLNK
          <InfoBadge aria-label="Informazioni">i</InfoBadge>
          <Quote>10,63 (+3,10%)</Quote>
          <SessionDate>1-ott-2020</SessionDate>
          Blink Charging Co
          <WindowControls>
            <button aria-label="Tastiera"><KeyboardIcon /></button>
            <button aria-label="Riduci"><MinimizeIcon /></button>
            <button aria-label="Ripristina finestra"><RestoreIcon /></button>
            <button aria-label="Chiudi"><CloseIcon size={12} color="#2ef0ff" /></button>
          </WindowControls>
        </TitleBar>
        <Workspace>
          <PropertiesDialog />
          <TradeColumn>
            <StatusRow>
              <span>Durata posiz.: <White>-</White></span>
              <span>Guadagno latente: <White>-</White></span>
              <span>Guadagno Giorno: <White>-</White></span>
              <span>
                I trade di oggi: <Count $c="#18c018">0</Count> <White>/</White> <Count $c="#1088c0">0</Count> <White>/</White> <Count $c={DOWN}>0</Count>
              </span>
              <span>Esposizione : <White>-</White></span>
            </StatusRow>
            <ToolRow>
              <DrawTools>
                <button aria-label="Griglia"><GridToolIcon /></button>
                <button aria-label="Elimina oggetti"><SmallBinIcon /></button>
                <button aria-label="Segmento"><SegmentIcon /></button>
                <button aria-label="Deviazione"><ChannelIcon letter="σ" /></button>
                <button aria-label="Errore"><ChannelIcon letter="ε" /></button>
                <button aria-label="Linea orizzontale"><HLineIcon /></button>
              </DrawTools>
              <ToolCell $w={195}><Combo label="Unità" options={['1000 unità', '500 unità']} w={85} /></ToolCell>
              <ToolCell $w={203}><Combo label="Periodo" options={['Giornaliero', 'Settimanale']} w={92} /></ToolCell>
              <ToolCell $w={50}>
                <IndicatorButton>
                  <button aria-label="Indicatori"><IndicatorIcon /></button>
                  <button aria-label="Altri indicatori"><Caret /></button>
                </IndicatorButton>
              </ToolCell>
              <OrderEntry />
            </ToolRow>
            <ChartFrame><Chart /></ChartFrame>
            <BottomBar>
              <ScrollTrack><ScrollThumb /></ScrollTrack>
              <ScrollArrow aria-label="Avanti">
                <svg width="5" height="8" viewBox="0 0 5 8"><path d="M0 0L5 4L0 8Z" fill="#ccc" /></svg>
              </ScrollArrow>
              <ZoomTools>
                <button aria-label="Impostazioni grafico"><ChartSettingsIcon /></button>
                <button aria-label="Adatta"><MagnifierIcon kind="fit" /></button>
                <button aria-label="Riduci zoom"><MagnifierIcon kind="out" /></button>
                <button aria-label="Aumenta zoom"><MagnifierIcon kind="in" /></button>
              </ZoomTools>
            </BottomBar>
          </TradeColumn>
        </Workspace>
      </Window>
    </>
  );
}
